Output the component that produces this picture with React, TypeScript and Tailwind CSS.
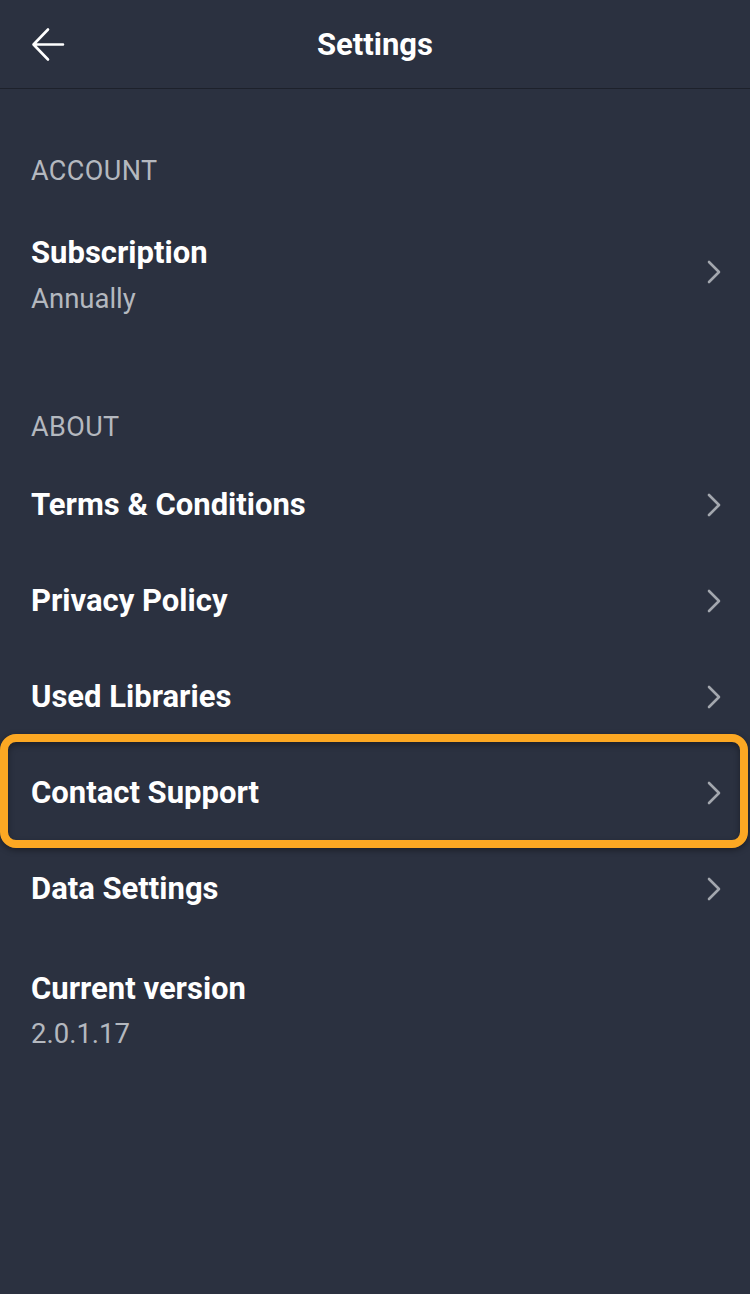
function Chevron({ className = "" }: { className?: string }) {
  return (
    <svg width="16" height="24" viewBox="0 0 16 24" fill="none" className={"shrink-0 " + className}>
      <path d="M3 2l10 10-10 10" stroke="#a3a7ae" strokeWidth="2.6" strokeLinecap="round" strokeLinejoin="round" />
    </svg>
  );
}

function BackArrow() {
  return (
    <svg width="34" height="35" viewBox="0 0 34 35" fill="none" className="absolute left-[31px] top-[27px]">
      <path d="M32 17.5H3M17 2.5L2.5 17.5 17 32.5" stroke="#ffffff" strokeWidth="2.6" strokeLinecap="round" strokeLinejoin="round" />
    </svg>
  );
}

function Row({ title }: { title: string }) {
  return (
    <div className="flex h-[96px] items-center justify-between pl-[31px] pr-[28px]">
      <span className="text-[31px] font-bold leading-[40px] text-white">{title}</span>
      <Chevron />
    </div>
  );
}

export default function App() {
  return (
    <div className="flex min-h-[1294px] w-[750px] flex-col bg-[#2b3140] font-['Roboto',sans-serif]">
      <div className="relative flex h-[89px] items-center justify-center border-b border-[#1d212b]">
        <BackArrow />
        <span className="mt-[2px] text-[31px] font-bold text-white">Settings</span>
      </div>

      <div className="pl-[31px] pt-[66px] text-[27px] leading-[32px] tracking-[0.4px] text-[#b4b8bf]">ACCOUNT</div>

      <div className="flex items-center justify-between pl-[31px] pr-[28px] pt-[46px]">
        <div className="flex flex-col">
          <span className="text-[31px] font-bold leading-[40px] text-white">Subscription</span>
          <span className="mt-[8px] text-[27.5px] leading-[36px] text-[#b4b8bf]">Annually</span>
        </div>
        <Chevron className="mb-[6px]" />
      </div>

      <div className="pl-[31px] pt-[94px] text-[27px] leading-[32px] tracking-[0.4px] text-[#b4b8bf]">ABOUT</div>

      <div className="mt-[14px]">
        <Row title="Terms & Conditions" />
        <Row title="Privacy Policy" />
        <Row title="Used Libraries" />
        <div className="relative">
          <Row title="Contact Support" />
          <div className="pointer-events-none absolute -top-[11px] -bottom-[7px] left-0 right-[2px] rounded-[16px] border-8 border-[#fca823] shadow-[inset_0_3px_6px_rgba(0,0,0,0.35),0_2px_6px_rgba(0,0,0,0.4)]" />
        </div>
        <Row title="Data Settings" />
      </div>

      <div className="flex flex-col pl-[31px] pt-[32px]">
        <span className="text-[31px] font-bold leading-[40px] text-white">Current version</span>
        <span className="mt-[7px] text-[27.5px] leading-[36px] text-[#b4b8bf]">2.0.1.17</span>
      </div>
    </div>
  );
}
